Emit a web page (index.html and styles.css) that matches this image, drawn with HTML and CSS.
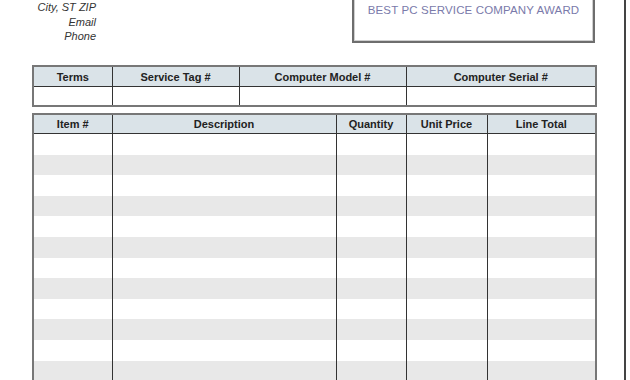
FILE: index.html
```html
<!DOCTYPE html>
<html>
<head>
<meta charset="utf-8">
<link rel="stylesheet" href="styles.css">
</head>
<body>
<div class="page">
  <div class="top">
    <div class="address">
      <div>City, ST ZIP</div>
      <div>Email</div>
      <div>Phone</div>
    </div>
    <div class="award">
      <div class="award-text">BEST PC SERVICE COMPANY AWARD</div>
    </div>
  </div>

  <table class="grid info">
    <colgroup>
      <col class="c1"><col class="c2"><col class="c3"><col class="c4">
    </colgroup>
    <tr class="head"><th>Terms</th><th>Service Tag #</th><th>Computer Model #</th><th>Computer Serial #</th></tr>
    <tr class="info-row"><td></td><td></td><td></td><td></td></tr>
  </table>

  <table class="grid items">
    <colgroup>
      <col class="i1"><col class="i2"><col class="i3"><col class="i4"><col class="i5">
    </colgroup>
    <tr class="head"><th>Item #</th><th>Description</th><th>Quantity</th><th>Unit Price</th><th>Line Total</th></tr>
    <tr class="row"><td></td><td></td><td></td><td></td><td></td></tr>
    <tr class="row alt"><td></td><td></td><td></td><td></td><td></td></tr>
    <tr class="row"><td></td><td></td><td></td><td></td><td></td></tr>
    <tr class="row alt"><td></td><td></td><td></td><td></td><td></td></tr>
    <tr class="row"><td></td><td></td><td></td><td></td><td></td></tr>
    <tr class="row alt"><td></td><td></td><td></td><td></td><td></td></tr>
    <tr class="row"><td></td><td></td><td></td><td></td><td></td></tr>
    <tr class="row alt"><td></td><td></td><td></td><td></td><td></td></tr>
    <tr class="row"><td></td><td></td><td></td><td></td><td></td></tr>
    <tr class="row alt"><td></td><td></td><td></td><td></td><td></td></tr>
    <tr class="row"><td></td><td></td><td></td><td></td><td></td></tr>
    <tr class="row alt"><td></td><td></td><td></td><td></td><td></td></tr>
    <tr class="row"><td></td><td></td><td></td><td></td><td></td></tr>
    <tr class="row alt"><td></td><td></td><td></td><td></td><td></td></tr>
  </table>
</div>
</body>
</html>
```
FILE: styles.css
```css
html, body {
  margin: 0;
  padding: 0;
  background: #fff;
  overflow: hidden;
}
body {
  width: 630px;
  height: 380px;
  font-family: "Liberation Sans", Arial, sans-serif;
  color: #222;
}
.page {
  width: 592px;
  height: 380px;
  padding-left: 32px;
  border-right: 2px solid #444;
  box-sizing: content-box;
  overflow: hidden;
}
.top {
  display: flex;
  height: 43px;
  align-items: flex-start;
}
.address {
  width: 64px;
  text-align: right;
  font-style: italic;
  font-size: 11px;
  line-height: 14.5px;
  color: #333;
}
.address div {
  white-space: nowrap;
}
.award {
  margin-left: 256px;
  margin-top: -22px;
  width: 239px;
  height: 61px;
  border: 2px solid #6e6e6e;
  box-shadow: inset 0 0 0 1px #cfcfcf;
  box-sizing: content-box;
  text-align: center;
  color: #7a7aaa;
  font-size: 11.5px;
}
.award-text {
  line-height: 13px;
  padding-top: 24px;
  letter-spacing: 0.15px;
}
.grid {
  border-collapse: collapse;
  table-layout: fixed;
  border: 2px solid #777;
}
.grid th, .grid td {
  border: 1px solid #333;
  padding: 0;
}
.grid th {
  background: #dae3e8;
  font-size: 11px;
  font-weight: bold;
  color: #222;
  text-align: center;
}
.info {
  margin-top: 22px;
  width: 563px;
}
.info .head th { height: 19px; }
.info-row td { height: 18px; }
.c1 { width: 79px; }
.c2 { width: 127px; }
.c3 { width: 167px; }
.c4 { width: 190px; }
.items {
  margin-top: 6px;
  width: 563px;
}
.items .head th { height: 18px; }
.i1 { width: 79px; }
.i2 { width: 224px; }
.i3 { width: 70px; }
.i4 { width: 81px; }
.i5 { width: 109px; }
.row td {
  height: 20.6px;
  border-top: none;
  border-bottom: none;
  background: #fff;
}
.row.alt td {
  background: #e8e8e8;
}
```
